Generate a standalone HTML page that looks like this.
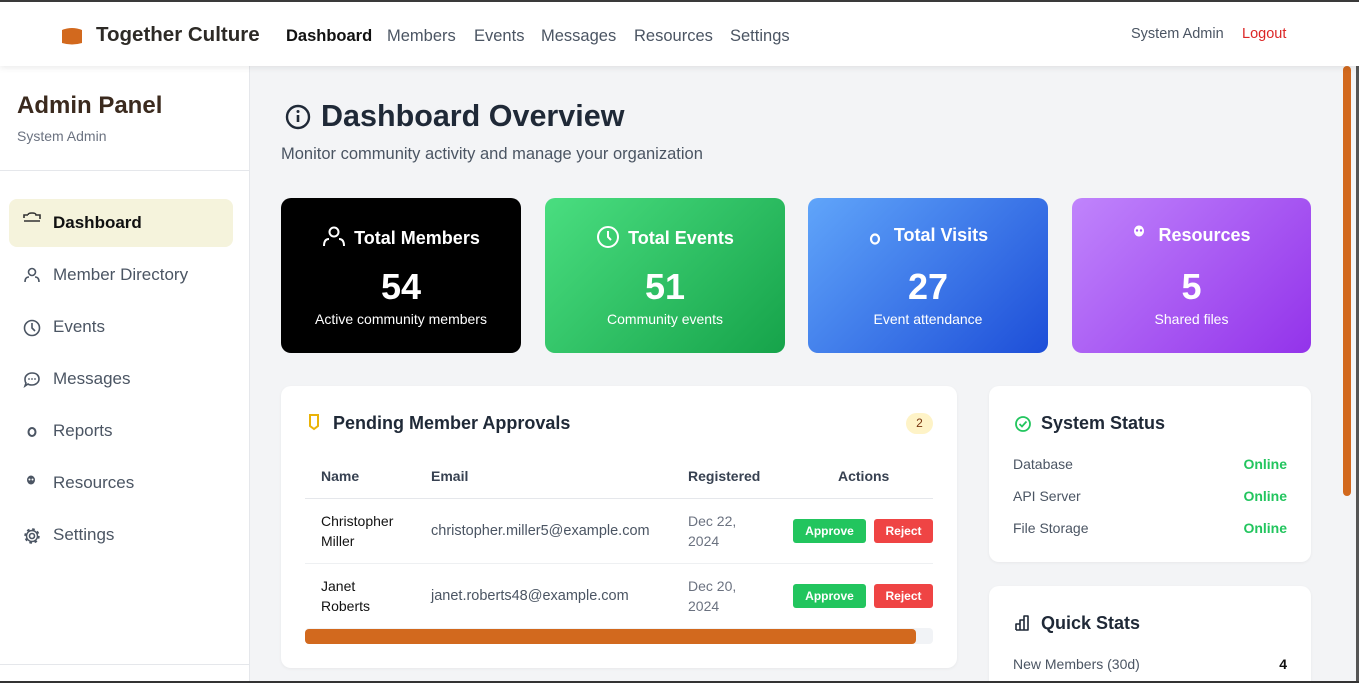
<!DOCTYPE html>
<html><head><meta charset="utf-8"><style>
*{box-sizing:border-box;margin:0;padding:0}
html,body{width:1359px;height:683px;overflow:hidden}
body{background:#f3f4f6;font-family:"Liberation Sans",Arial,sans-serif;position:relative;color:#1f2937}
.abs{position:absolute}
.top{left:0;top:0;width:1359px;height:66px;background:#fff;border-top:2px solid #3a3a3a;box-shadow:0 2px 6px rgba(0,0,0,.08);z-index:2}
.nav a{position:absolute;top:25px;font-size:16.5px;color:#4b5563;text-decoration:none}
.side{left:0;top:66px;width:250px;height:617px;background:#fff;border-right:1px solid #e5e7eb}
.si{position:absolute;left:53px;font-size:17px;color:#4b5563}
.ic{position:absolute;left:23px}
.card{border-radius:10px;color:#fff;text-align:center;height:155px;top:198px;width:240px;overflow:hidden}
.card .t{position:absolute;top:27px;left:0;right:0;font-size:18px;font-weight:bold}
.card .n{position:absolute;top:68px;left:0;right:0;font-size:36px;font-weight:bold}
.card .s{position:absolute;top:113px;left:0;right:0;font-size:14px}
.panel{background:#fff;border-radius:10px;box-shadow:0 1px 3px rgba(0,0,0,.05)}
.th{position:absolute;top:468px;font-size:14px;font-weight:bold;color:#374151}
.td{position:absolute;font-size:14px;line-height:20px}
.btn{position:absolute;height:24px;border-radius:3px;color:#fff;font-size:12px;font-weight:bold;text-align:center;line-height:24px}
.row{position:absolute;left:1013px;font-size:14px;color:#4b5563}
.ok{position:absolute;left:1240px;width:47px;text-align:right;font-size:14px;color:#22c55e;font-weight:bold}
</style></head><body>
<div class="abs top">
  <svg class="abs" style="left:60px;top:25px" width="24" height="20"><path d="M2 3 Q12 -1 22 3 L22 16 Q12 19 2 16Z" fill="#d2691e"/></svg>
  <div class="abs" style="left:96px;top:21px;font-size:20.5px;font-weight:bold;color:#2d2a26">Together Culture</div>
  <div class="nav">
    <a style="left:286px;color:#111;font-weight:bold">Dashboard</a>
    <a style="left:387px">Members</a><a style="left:474px">Events</a><a style="left:541px">Messages</a><a style="left:634px">Resources</a><a style="left:730px">Settings</a>
  </div>
  <div class="abs" style="left:1131px;top:24px;font-size:14.5px;color:#4b5563">System Admin</div>
  <div class="abs" style="left:1242px;top:24px;font-size:14.5px;color:#dc2626">Logout</div>
</div>
<div class="abs side">
  <div class="abs" style="left:17px;top:26px;font-size:24px;font-weight:bold;color:#3b2a1e">Admin Panel</div>
  <div class="abs" style="left:17px;top:62px;font-size:14px;color:#6b7280">System Admin</div>
  <div class="abs" style="left:0;top:104px;width:249px;border-top:1px solid #e5e7eb"></div>
  <div class="abs" style="left:9px;top:133px;width:224px;height:48px;background:#f5f3dc;border-radius:8px"></div>
  <svg class="ic" style="top:146px" width="18" height="14"><path d="M1 6 V3 h4 M5 3 Q5 1 9 1 Q13 1 13 3 h4 v4 M1 9 h16" stroke="#333" stroke-width="1.6" fill="none"/></svg>
  <div class="si" style="top:147px;color:#111;font-weight:bold">Dashboard</div>
  <svg class="ic" style="top:200px" width="18" height="18"><circle cx="9" cy="6" r="3.5" stroke="#4b5563" stroke-width="1.6" fill="none"/><path d="M2 16 Q2 11 6 11 M16 16 Q16 11 12 11" stroke="#4b5563" stroke-width="1.6" fill="none"/></svg>
  <div class="si" style="top:199px">Member Directory</div>
  <svg class="ic" style="top:253px" width="18" height="18"><circle cx="9" cy="9" r="7.5" stroke="#4b5563" stroke-width="1.6" fill="none"/><path d="M9 4 V9 L12 12" stroke="#4b5563" stroke-width="1.6" fill="none"/></svg>
  <div class="si" style="top:251px">Events</div>
  <svg class="ic" style="top:305px" width="18" height="18"><path d="M9 2 C14 2 16 5 16 8 C16 12 12 14 9 14 C7 14 6 14 5 13 L2 15 L3 12 C2 11 2 9 2 8 C2 5 5 2 9 2Z" stroke="#4b5563" stroke-width="1.6" fill="none"/><circle cx="6" cy="8" r=".9" fill="#4b5563"/><circle cx="9" cy="8" r=".9" fill="#4b5563"/><circle cx="12" cy="8" r=".9" fill="#4b5563"/></svg>
  <div class="si" style="top:303px">Messages</div>
  <svg class="ic" style="top:361px;left:27px" width="10" height="10"><ellipse cx="5" cy="5" rx="3.5" ry="4" stroke="#4b5563" stroke-width="2" fill="none"/></svg>
  <div class="si" style="top:355px">Reports</div>
  <svg class="ic" style="top:409px;left:26px" width="10" height="12"><ellipse cx="5" cy="5" rx="4" ry="4.5" fill="#4b5563"/><circle cx="3.5" cy="4.5" r="1" fill="#fff"/><circle cx="6.5" cy="4.5" r="1" fill="#fff"/></svg>
  <div class="si" style="top:407px">Resources</div>
  <svg class="ic" style="top:461px" width="18" height="18"><circle cx="9" cy="9" r="2.5" stroke="#4b5563" stroke-width="1.6" fill="none"/><circle cx="9" cy="9" r="6.5" stroke="#4b5563" stroke-width="2.5" stroke-dasharray="2.5 2.6" fill="none"/><circle cx="9" cy="9" r="5.5" stroke="#4b5563" stroke-width="1.4" fill="none"/></svg>
  <div class="si" style="top:459px">Settings</div>
  <div class="abs" style="left:0;top:598px;width:249px;border-top:1px solid #e5e7eb"></div>
</div>
<svg class="abs" style="left:285px;top:104px" width="26" height="26"><circle cx="13" cy="13" r="11" stroke="#1f2937" stroke-width="2.4" fill="none"/><path d="M13 11 V18" stroke="#1f2937" stroke-width="2.6"/><circle cx="13" cy="7.5" r="1.5" fill="#1f2937"/></svg>
<div class="abs" style="left:321px;top:99px;font-size:30.5px;font-weight:bold;color:#1f2937">Dashboard Overview</div>
<div class="abs" style="left:281px;top:145px;font-size:16.5px;color:#4b5563">Monitor community activity and manage your organization</div>

<div class="abs card" style="left:281px;background:#000"><div class="t"><svg width="24" height="22" style="vertical-align:-3px;margin-right:8px"><circle cx="12" cy="7" r="4.5" stroke="#fff" stroke-width="2" fill="none"/><path d="M2 21 Q2 14 7 14 M22 21 Q22 14 17 14" stroke="#fff" stroke-width="2" fill="none"/></svg>Total Members</div><div class="n">54</div><div class="s">Active community members</div></div>
<div class="abs card" style="left:545px;background:linear-gradient(135deg,#4ade80,#16a34a)"><div class="t"><svg width="24" height="24" style="vertical-align:-5px;margin-right:8px"><circle cx="12" cy="12" r="10" stroke="#fff" stroke-width="2" fill="none"/><path d="M12 6V12L15 15" stroke="#fff" stroke-width="2" fill="none"/></svg>Total Events</div><div class="n">51</div><div class="s">Community events</div></div>
<div class="abs card" style="left:808px;background:linear-gradient(135deg,#60a5fa,#1d4ed8)"><div class="t"><svg width="14" height="14" style="vertical-align:-4px;margin-right:12px"><ellipse cx="7" cy="8" rx="4" ry="4.5" stroke="#fff" stroke-width="2.2" fill="none"/></svg>Total Visits</div><div class="n">27</div><div class="s">Event attendance</div></div>
<div class="abs card" style="left:1072px;width:239px;background:linear-gradient(135deg,#c084fc,#9333ea)"><div class="t"><svg width="14" height="16" style="vertical-align:0;margin-right:12px"><ellipse cx="7" cy="6" rx="5" ry="5.5" fill="#fff"/><circle cx="5" cy="5.5" r="1.2" fill="#a855f7"/><circle cx="9" cy="5.5" r="1.2" fill="#a855f7"/></svg>Resources</div><div class="n">5</div><div class="s">Shared files</div></div>

<div class="abs panel" style="left:281px;top:386px;width:676px;height:282px"></div>
<svg class="abs" style="left:308px;top:414px" width="12" height="20"><path d="M2 1 H10 V12 L6 15 L2 12Z" stroke="#eab308" stroke-width="2" fill="none"/></svg>
<div class="abs" style="left:333px;top:413px;font-size:18px;font-weight:bold">Pending Member Approvals</div>
<div class="abs" style="left:906px;top:413px;width:27px;height:21px;border-radius:11px;background:#fef3c7;font-size:12px;text-align:center;line-height:21px;color:#78350f">2</div>
<div class="th" style="left:321px">Name</div><div class="th" style="left:431px">Email</div><div class="th" style="left:688px">Registered</div><div class="th" style="left:838px">Actions</div>
<div class="abs" style="left:305px;top:498px;width:628px;border-top:1px solid #e5e7eb"></div>
<div class="abs" style="left:305px;top:563px;width:628px;border-top:1px solid #eef0f2"></div>
<div class="td" style="left:321px;top:511px;color:#111">Christopher<br>Miller</div>
<div class="td" style="left:431px;top:521px;color:#4b5563;font-size:14.5px">christopher.miller5@example.com</div>
<div class="td" style="left:688px;top:511px;color:#6b7280">Dec 22,<br>2024</div>
<div class="btn" style="left:793px;top:519px;width:73px;background:#22c55e">Approve</div>
<div class="btn" style="left:874px;top:519px;width:59px;background:#ef4444">Reject</div>
<div class="td" style="left:321px;top:576px;color:#111">Janet<br>Roberts</div>
<div class="td" style="left:431px;top:586px;color:#4b5563;font-size:14.5px">janet.roberts48@example.com</div>
<div class="td" style="left:688px;top:576px;color:#6b7280">Dec 20,<br>2024</div>
<div class="btn" style="left:793px;top:584px;width:73px;background:#22c55e">Approve</div>
<div class="btn" style="left:874px;top:584px;width:59px;background:#ef4444">Reject</div>
<div class="abs" style="left:305px;top:628px;width:628px;height:16px;background:#f1f3f6;border-radius:4px"></div>
<div class="abs" style="left:305px;top:629px;width:611px;height:15px;background:#d2691e;border-radius:4px"></div>

<div class="abs panel" style="left:989px;top:386px;width:322px;height:176px"></div>
<svg class="abs" style="left:1014px;top:415px" width="18" height="18"><circle cx="9" cy="9" r="7" stroke="#22c55e" stroke-width="1.8" fill="none"/><path d="M5.5 9 L8 11.5 L12.5 6.5" stroke="#22c55e" stroke-width="1.8" fill="none"/></svg>
<div class="abs" style="left:1041px;top:413px;font-size:18px;font-weight:bold">System Status</div>
<div class="row" style="top:456px">Database</div><div class="ok" style="top:456px">Online</div>
<div class="row" style="top:488px">API Server</div><div class="ok" style="top:488px">Online</div>
<div class="row" style="top:520px">File Storage</div><div class="ok" style="top:520px">Online</div>

<div class="abs panel" style="left:989px;top:586px;width:322px;height:97px;border-radius:10px 10px 0 0"></div>
<svg class="abs" style="left:1014px;top:614px" width="18" height="18"><path d="M2 16 V10 H6 V16 M6 16 V6 H10 V16 M10 16 V2 H14 V16 H2" stroke="#1f2937" stroke-width="1.6" fill="none" stroke-linejoin="round"/></svg>
<div class="abs" style="left:1041px;top:613px;font-size:18px;font-weight:bold">Quick Stats</div>
<div class="row" style="top:656px">New Members (30d)</div><div class="abs" style="left:1270px;top:656px;width:17px;text-align:right;font-size:14px;font-weight:bold;color:#111">4</div>

<div class="abs" style="left:1343px;top:66px;width:8px;height:430px;background:#d2691e;border-radius:4px"></div>
<div class="abs" style="left:1356px;top:0;width:3px;height:683px;background:#555"></div>
<div class="abs" style="left:0;top:681px;width:1359px;height:2px;background:#333"></div>
</body></html>
